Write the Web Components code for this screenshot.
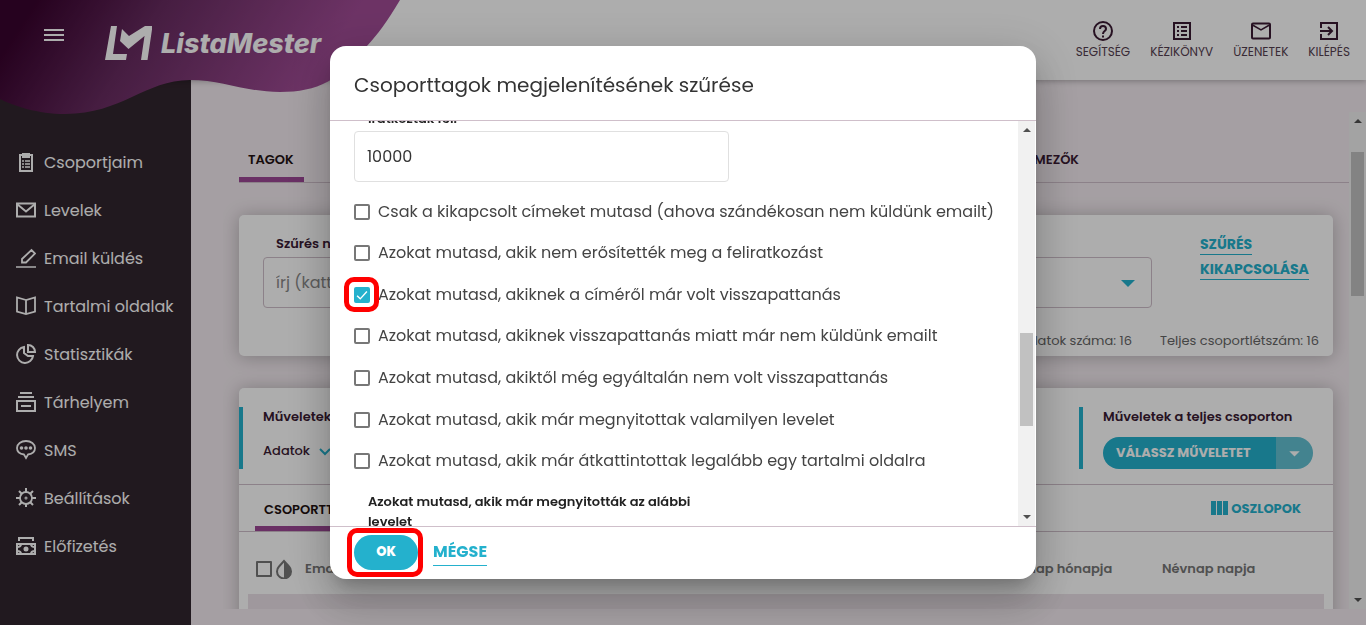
<!DOCTYPE html>
<html lang="hu">
<head>
<meta charset="utf-8">
<meta name="viewport" content="width=device-width, initial-scale=1">
<title>ListaMester</title>
<style>
    :root {
        --teal: #24b1cd;
        --purple: #9c4795;
        --ink: #3a1a33;
        --page: #f3ebf0;
        --side: #32252e;
        --line: #cfbfca;
        --field: #e0e0e0;
    }
    body {
        margin: 0;
        height: 100vh;
        overflow: hidden;
        background: var(--page);
        font-family: Poppins, Inter, "Open Sans", sans-serif;
        font-size: 13px;
        line-height: 20px;
        color: #333;
    }
</style>
</head>
<body>
<lm-app>
    <lm-header slot="header">
        <lm-tool icon="help">SEGÍTSÉG</lm-tool>
        <lm-tool icon="manual">KÉZIKÖNYV</lm-tool>
        <lm-tool icon="message">ÜZENETEK</lm-tool>
        <lm-tool icon="exit">KILÉPÉS</lm-tool>
    </lm-header>
    <lm-sidebar slot="sidebar">
        <lm-nav-item icon="clipboard">Csoportjaim</lm-nav-item>
        <lm-nav-item icon="mail">Levelek</lm-nav-item>
        <lm-nav-item icon="pen">Email küldés</lm-nav-item>
        <lm-nav-item icon="book">Tartalmi oldalak</lm-nav-item>
        <lm-nav-item icon="pie">Statisztikák</lm-nav-item>
        <lm-nav-item icon="storage">Tárhelyem</lm-nav-item>
        <lm-nav-item icon="sms">SMS</lm-nav-item>
        <lm-nav-item icon="gear">Beállítások</lm-nav-item>
        <lm-nav-item icon="money">Előfizetés</lm-nav-item>
    </lm-sidebar>
    <lm-page-tabs></lm-page-tabs>
    <lm-card><lm-filter></lm-filter></lm-card>
    <lm-card><lm-members></lm-members></lm-card>
</lm-app>
<lm-dialog heading="Csoporttagok megjelenítésének szűrése">
    <lm-text-field label="Iratkoztak fel:" value="10000"></lm-text-field>
    <lm-check-list>
        <lm-checkbox>Csak a kikapcsolt címeket mutasd (ahova szándékosan nem küldünk emailt)</lm-checkbox>
        <lm-checkbox>Azokat mutasd, akik nem erősítették meg a feliratkozást</lm-checkbox>
        <lm-checkbox checked marked>Azokat mutasd, akiknek a címéről már volt visszapattanás</lm-checkbox>
        <lm-checkbox>Azokat mutasd, akiknek visszapattanás miatt már nem küldünk emailt</lm-checkbox>
        <lm-checkbox>Azokat mutasd, akiktől még egyáltalán nem volt visszapattanás</lm-checkbox>
        <lm-checkbox>Azokat mutasd, akik már megnyitottak valamilyen levelet</lm-checkbox>
        <lm-checkbox>Azokat mutasd, akik már átkattintottak legalább egy tartalmi oldalra</lm-checkbox>
    </lm-check-list>
    <lm-text-field label="Azokat mutasd, akik már megnyitották az alábbi levelet" value=""></lm-text-field>
</lm-dialog>

<script>
const ICONS = {
    menu: '<path d="M0 6h20M0 11h20M0 16h20"/>',
    help: '<circle cx="10" cy="10" r="9"/><path d="M7 8c0-4 6-4 6 0 0 2-3 2.300-3 5"/><path d="M10 14.500v2"/>',
    manual: '<path d="M2 2h16v16H2z"/><path d="M5 6h2M5 10h2M5 14h2M9 6h6M9 10h6M9 14h6"/>',
    message: '<rect x="1" y="2.500" width="18" height="15" rx="1"/><path stroke-width="1.500" d="M1.500 4l8.500 5 8.500-5"/>',
    exit: '<path d="M2 7V2h16v16H2v-5M1 10h12M9 6l4 4-4 4"/>',
    clipboard: '<path d="M4 3h12v16H4z"/><path d="M7 2h6v3H7z" fill="currentColor"/><path stroke-width="1.500" d="M6 9h2M6 12h2M6 15h2M9 9h5M9 12h5M9 15h5"/>',
    mail: '<path d="M1 3.500h18v13H1z"/><path d="M1 4l9 7.500L19 4"/>',
    pen: '<path stroke-width="1.500" d="M0 19h20"/><path stroke-width="1.800" d="M6 14.500v-3.500L15.500 2l3.500 3.500-9 9z"/>',
    book: '<path stroke-width="1.800" d="M10 4L1 1.500v14L10 18l9-2.500v-14zM10 4v14"/>',
    pie: '<path d="M8 3a8 8 0 1 0 9 9l-5 0L8 9z"/><path d="M12 1v7h7a7 7 0 0 0-7-7z"/>',
    storage: '<path d="M4 1h12M2 5h16M1 9h18v10H1zM5 14h10"/>',
    sms: '<path stroke-width="1.800" d="M10 1c-5 0-9 3-9 7 0 4 3 6 7 6.500l2 3.500 2-3.500c4-.5 7-2.500 7-6.500 0-4-4-7-9-7z"/><g fill="currentColor" stroke="none"><circle cx="5.500" cy="8" r="1.800"/><circle cx="10" cy="8" r="1.800"/><circle cx="14.500" cy="8" r="1.800"/></g>',
    gear: '<circle cx="10" cy="10" r="6" stroke-width="1.800"/><circle cx="10" cy="10" r=".5"/><path d="M10 0v4M10 16v3M0 10h4M16 10h4M3 3l2.500 2.500M14.500 14.500l2.500 2.500M3 17l2.500-2.500M14.500 5.500l2.500-2.500"/>',
    money: '<path d="M3 5V2h14v3M1 8h18v10H1z"/><path d="M5 8c0 2-2 3-4 3M15 8c0 2 2 3 4 3M5 18c0-2-2-3-4-3M15 18c0-2 2-3 4-3"/><circle cx="10" cy="13" r="1.500" fill="currentColor"/>',
    drop: '<path stroke-width="2" d="M10 2L5 7.500a7 7 0 1 0 10 0z"/><path d="M10 1.500v18a7 7 0 0 0 5-12z" fill="currentColor" stroke="none"/>',
    columns: '<g fill="currentColor" stroke="none"><path d="M1 3h5v14H1zM7 3h5v14H7zM13 3h5v14h-5z"/></g>',
    chevron: '<path d="M5 8l5 5 5-5"/>',
    caret: '<path d="M3 7h14l-7 7z" fill="currentColor" stroke="none"/>',
    check: '<path d="M3 11l4.500 4.500L17 5"/>'
};

// Every element below only differs in its template.
class LmElement extends HTMLElement {
    constructor() {
        super();
        this.attachShadow({ mode: 'open' });
    }

    connectedCallback() {
        this.shadowRoot.innerHTML = `
            <style>
                * { box-sizing: border-box; }
                button, input { font: inherit; }
                a { color: inherit; text-decoration: none; }
            </style>
            ${this.template()}
        `;
    }
}

class LmIcon extends LmElement {
    template() {
        return `
            <style>
                :host { display: block; flex: none; width: 20px; height: 20px; }
                svg { display: block; width: 100%; height: 100%; }
            </style>
            <svg viewBox="0 0 20 20" fill="none" stroke="currentColor" stroke-width="2" aria-hidden="true">${ICONS[this.getAttribute('name')]}</svg>
        `;
    }
}

class LmApp extends LmElement {
    template() {
        return `
            <style>
                :host {
                    display: grid;
                    grid-template: 80px minmax(0, 1fr) / 191px minmax(0, 1fr);
                    height: 100vh;
                }
                slot[name="header"] { display: block; grid-column: 1 / 3; z-index: 1; }
                main {
                    display: flex;
                    min-width: 0;
                    padding: 32px 0 16px 32px;
                }
                .content {
                    display: flex;
                    flex: 1;
                    flex-direction: column;
                    gap: 32px;
                    min-width: 0;
                    overflow: hidden;
                    padding: 24px 0 0 16px;
                }
                ::slotted(lm-card) { margin-right: 16px; }
            </style>
            <slot name="header"></slot>
            <slot name="sidebar"></slot>
            <main>
                <div class="content"><slot></slot></div>
                <lm-scrollbar start="29" size="144"></lm-scrollbar>
            </main>
        `;
    }
}

class LmHeader extends LmElement {
    template() {
        return `
            <style>
                :host {
                    display: flex;
                    justify-content: space-between;
                    position: relative;
                    height: 80px;
                    background: #fff;
                    box-shadow: 0 1px 6px rgba(0, 0, 0, .3);
                }
                /* the wave hangs over the side bar and the page */
                .wave { position: absolute; top: 0; left: 0; }
                .brand {
                    display: flex;
                    align-items: flex-start;
                    position: relative;
                    padding: 24px 0 0 44px;
                    color: #fff;
                }
                button {
                    margin: 0 41px 0 0;
                    padding: 0;
                    border: 0;
                    background: none;
                    color: inherit;
                }
                a { display: flex; gap: 9px; }
                .name {
                    font-family: Inter, "Open Sans", sans-serif;
                    font-size: 27px;
                    font-weight: 800;
                    font-style: italic;
                    line-height: 40px;
                }
                nav { display: flex; gap: 20px; padding: 21px 16px 0 0; }
            </style>
            <svg class="wave" width="400" height="116" viewBox="0 0 400 116" aria-hidden="true">
                <linearGradient id="g" gradientUnits="userSpaceOnUse" x1="30" y1="10" x2="260" y2="160">
                    <stop offset="0" stop-color="#39032e"/>
                    <stop offset=".4" stop-color="#682c61"/>
                    <stop offset="1" stop-color="#a14c96"/>
                </linearGradient>
                <path fill="url(#g)" d="M0 0H400C387 22 378 34 367 46C340 80 318 92 280 92C245 92 222 80 190 80C145 80 122 114 65 114C38 114 14 106 0 99Z"/>
            </svg>
            <div class="brand">
                <button aria-label="Menü"><lm-icon name="menu"></lm-icon></button>
                <a href="#" aria-label="ListaMester">
                    <svg width="47" height="38" viewBox="104 24 47 38" fill="currentColor" aria-hidden="true">
                        <path d="M110 26h6l-4 28h14l-1 6h-21z"/>
                        <path d="M121 29l7 7 16-10h7.500l-5 34h-6.500l3.500-24-16 13-8.500-8z"/>
                    </svg>
                    <span class="name">ListaMester</span>
                </a>
            </div>
            <nav><slot></slot></nav>
        `;
    }
}

class LmTool extends LmElement {
    template() {
        return `
            <style>
                :host { display: block; color: var(--ink); }
                a {
                    display: flex;
                    flex-direction: column;
                    align-items: center;
                    font-size: 12px;
                    line-height: 22px;
                }
                span { color: #554050; }
            </style>
            <a href="#"><lm-icon name="${this.getAttribute('icon')}"></lm-icon><span><slot></slot></span></a>
        `;
    }
}

class LmSidebar extends LmElement {
    template() {
        return `
            <style>
                :host { display: block; padding-top: 58px; background: var(--side); }
            </style>
            <nav><slot></slot></nav>
        `;
    }
}

class LmNavItem extends LmElement {
    template() {
        return `
            <style>
                :host { display: block; color: #fff; font-size: 16px; line-height: 25px; }
                a {
                    display: flex;
                    align-items: center;
                    gap: 8px;
                    height: 48px;
                    padding-left: 16px;
                    white-space: nowrap;
                }
            </style>
            <a href="#"><lm-icon name="${this.getAttribute('icon')}"></lm-icon><slot></slot></a>
        `;
    }
}

class LmScrollbar extends LmElement {
    template() {
        return `
            <style>
                :host {
                    display: flex;
                    flex: none;
                    flex-direction: column;
                    align-items: center;
                    width: 17px;
                    padding: 7px 0;
                    background: #f1f1f1;
                }
                i { border: 4px solid transparent; }
                .up { border-top: 0; border-bottom-color: #505050; }
                .down { margin-top: auto; border-bottom: 0; border-top-color: #505050; }
                .thumb {
                    width: 13px;
                    height: ${this.getAttribute('size')}px;
                    margin-top: ${this.getAttribute('start')}px;
                    background: #c1c1c1;
                }
            </style>
            <i class="up"></i><div class="thumb"></div><i class="down"></i>
        `;
    }
}

class LmPageTabs extends LmElement {
    template() {
        return `
            <style>
                :host { display: block; }
                nav {
                    display: flex;
                    justify-content: space-between;
                    height: 47px;
                    padding-right: 260px;
                    border-bottom: 1px solid var(--line);
                    color: var(--ink);
                    font-weight: 600;
                }
                a { padding: 14px 10px 0 9px; }
                .active { border-bottom: 5px solid var(--purple); color: #211; }
            </style>
            <nav><a class="active" href="#">TAGOK</a><a href="#">MEZŐK</a></nav>
        `;
    }
}

class LmCard extends LmElement {
    template() {
        return `
            <style>
                :host {
                    display: block;
                    flex: none;
                    border-radius: 5px;
                    background: #fff;
                    box-shadow: 0 1px 18px rgba(0, 0, 0, .25);
                }
            </style>
            <slot></slot>
        `;
    }
}

class LmFilter extends LmElement {
    template() {
        return `
            <style>
                :host { display: block; padding: 17px 14px 4px 24px; }
                .row { display: flex; gap: 48px; }
                .field { flex: 1; }
                label {
                    display: block;
                    padding: 2px 0 3px 13px;
                    color: var(--ink);
                    font-weight: 600;
                }
                .select {
                    display: flex;
                    align-items: center;
                    height: 51px;
                    padding: 0 13px 0 12px;
                    border: 1px solid var(--line);
                    border-radius: 4px;
                    color: var(--teal);
                }
                input {
                    flex: 1;
                    border: 0;
                    padding: 0;
                    background: none;
                    font-size: 16px;
                }
                input::placeholder { color: #888; }
                .reset { width: 119px; color: var(--teal); font-size: 14px; font-weight: 700; line-height: 25px; }
                .reset a { border-bottom: 1px solid; }
                .totals {
                    display: flex;
                    justify-content: flex-end;
                    gap: 28px;
                    padding-top: 22px;
                    color: #666;
                    line-height: 22px;
                }
            </style>
            <div class="row">
                <div class="field">
                    <label for="name">Szűrés névre</label>
                    <div class="select"><input id="name" placeholder="írj (kattints)"><lm-icon name="caret"></lm-icon></div>
                </div>
                <div class="reset"><a href="#">SZŰRÉS KIKAPCSOLÁSA</a></div>
            </div>
            <div class="totals"><span>Találatok száma: 16</span><span>Teljes csoportlétszám: 16</span></div>
        `;
    }
}

class LmMembers extends LmElement {
    template() {
        return `
            <style>
                :host { display: block; padding-top: 19px; color: var(--ink); }
                .actions {
                    display: flex;
                    justify-content: space-between;
                    padding: 0 20px 15px 0;
                    border-bottom: 1px solid var(--line);
                }
                section {
                    height: 62px;
                    padding-left: 20px;
                    border-left: 4px solid var(--teal);
                    font-weight: 600;
                }
                .data {
                    display: flex;
                    align-items: center;
                    gap: 5px;
                    margin-top: 14px;
                    font-weight: 500;
                }
                .data lm-icon, .columns lm-icon { color: var(--teal); }
                .split {
                    display: flex;
                    width: 210px;
                    height: 32px;
                    margin-top: 10px;
                    border-radius: 16px;
                    overflow: hidden;
                }
                .split button {
                    display: flex;
                    align-items: center;
                    height: 32px;
                    padding: 0 13px;
                    border: 0;
                    background: var(--teal);
                    color: #fff;
                    font-weight: 700;
                    white-space: nowrap;
                }
                .split button:first-child { flex: 1; }
                .split button:last-child { width: 37px; padding: 0 11px; background: #63c1d3; }
                .split lm-icon { width: 15px; height: 15px; }
                .bar {
                    display: flex;
                    justify-content: space-between;
                    height: 47px;
                    padding: 0 32px 0 16px;
                    border-bottom: 1px solid var(--line);
                }
                .tab {
                    padding: 15px 9px 0;
                    border-bottom: 5px solid var(--purple);
                    color: #211;
                    font-weight: 600;
                }
                .columns {
                    display: flex;
                    align-items: center;
                    gap: 1px;
                    color: var(--teal);
                    font-weight: 700;
                    line-height: 21px;
                }
                .list { padding: 0 9px; }
                table { width: 100%; border-collapse: collapse; table-layout: fixed; }
                th {
                    height: 62px;
                    padding: 11px 0 0;
                    color: #777;
                    font-weight: 600;
                    line-height: 21px;
                    text-align: left;
                }
                td { height: 40px; background: #eae1e7; }
                .month { width: 160px; }
                .day { width: 162px; }
                .pick { display: flex; align-items: center; gap: 2px; padding-left: 8px; }
                .pick input {
                    appearance: none;
                    width: 16px;
                    height: 16px;
                    margin: 0;
                    border: 2px solid #777;
                    border-radius: 1px;
                }
                .pick span { padding-left: 9px; }
            </style>
            <div class="actions">
                <section>
                    <div>Műveletek</div>
                    <a class="data" href="#">Adatok <lm-icon name="chevron"></lm-icon></a>
                </section>
                <section>
                    <div>Műveletek a teljes csoporton</div>
                    <div class="split">
                        <button>VÁLASSZ MŰVELETET</button>
                        <button aria-label="Műveletek"><lm-icon name="caret"></lm-icon></button>
                    </div>
                </section>
            </div>
            <div class="bar">
                <a class="tab" href="#">CSOPORTTAGOK</a>
                <a class="columns" href="#"><lm-icon name="columns"></lm-icon>OSZLOPOK</a>
            </div>
            <div class="list">
                <table>
                    <tr>
                        <th><div class="pick"><input type="checkbox" aria-label="Összes"><lm-icon name="drop"></lm-icon><span>Email</span></div></th>
                        <th class="month">Névnap hónapja</th>
                        <th class="day">Névnap napja</th>
                    </tr>
                    <tr><td></td><td></td><td></td></tr>
                </table>
            </div>
        `;
    }
}

class LmTextField extends LmElement {
    template() {
        return `
            <style>
                :host { display: block; max-width: 375px; }
                label {
                    display: block;
                    padding: 0 13px 2px 14px;
                    font-weight: 600;
                    color: #222;
                }
                input {
                    display: block;
                    width: 100%;
                    height: 51px;
                    padding: 0 12px;
                    border: 1px solid var(--field);
                    border-radius: 4px;
                    color: #333;
                    font-size: 16px;
                }
            </style>
            <label for="field">${this.getAttribute('label')}</label>
            <input id="field" value="${this.getAttribute('value')}">
        `;
    }
}

class LmCheckList extends LmElement {
    template() {
        return `
            <style>
                :host {
                    display: grid;
                    grid-auto-rows: 1fr;
                    min-height: 291px;
                    margin: 9px 0 10px;
                }
            </style>
            <slot></slot>
        `;
    }
}

class LmCheckbox extends LmElement {
    template() {
        return `
            <style>
                :host { display: flex; align-items: center; }
                label {
                    display: flex;
                    align-items: center;
                    gap: 8px;
                    color: #444;
                    font-size: 16px;
                    white-space: nowrap;
                }
                .box { display: grid; position: relative; color: #fff; }
                .box > * { grid-area: 1 / 1; }
                input {
                    appearance: none;
                    width: 16px;
                    height: 16px;
                    margin: 0;
                    border: 2px solid #777;
                    border-radius: 2px;
                }
                input:checked { border-color: var(--teal); background: var(--teal); }
                lm-icon { width: 14px; height: 14px; place-self: center; pointer-events: none; }
                :host([marked]) .box::after {
                    content: "";
                    position: absolute;
                    inset: -10px -9px -9px -10px;
                    border: 5px solid #f00;
                    border-radius: 10px;
                }
            </style>
            <label>
                <span class="box">
                    <input type="checkbox" ${this.hasAttribute('checked') ? 'checked' : ''}>
                    <lm-icon name="check"></lm-icon>
                </span>
                <span><slot></slot></span>
            </label>
        `;
    }
}

class LmDialog extends LmElement {
    template() {
        return `
            <style>
                :host {
                    display: flex;
                    justify-content: center;
                    position: fixed;
                    inset: 0;
                    z-index: 2;
                    padding: 46px 0;
                    background: rgba(0, 0, 0, .32);
                }
                .panel {
                    display: flex;
                    flex-direction: column;
                    width: 706px;
                    max-width: 90%;
                    border-radius: 16px;
                    background: #fff;
                    box-shadow: 0 11px 15px -7px rgba(0, 0, 0, .2), 0 24px 38px 3px rgba(0, 0, 0, .14), 0 9px 46px 8px rgba(0, 0, 0, .12);
                }
                h2 {
                    margin: 0;
                    padding: 24px 24px 20px;
                    border-bottom: 1px solid var(--line);
                    font-size: 20px;
                    font-weight: 400;
                    line-height: 30px;
                }
                .body { display: flex; flex: 1; min-height: 0; padding-right: 1px; }
                .content {
                    flex: 1;
                    min-width: 0;
                    overflow: hidden;
                    padding-left: 24px;
                }
                /* scrolled down until only the foot of the first label shows */
                .scrolled { margin-top: -12px; }
                footer {
                    display: flex;
                    align-items: center;
                    gap: 15px;
                    height: 53px;
                    padding: 0 24px 2px;
                    border-top: 1px solid var(--line);
                }
                .ok { position: relative; }
                .ok::after {
                    content: "";
                    position: absolute;
                    inset: -7px -5px -7px -7px;
                    border: 5px solid #f00;
                    border-radius: 10px;
                    pointer-events: none;
                }
                button {
                    display: block;
                    width: 64px;
                    height: 35px;
                    border: 0;
                    border-radius: 18px;
                    background: var(--teal);
                    color: #fff;
                    font-weight: 800;
                }
                footer a {
                    border-bottom: 1px solid;
                    color: var(--teal);
                    font-size: 16px;
                    font-weight: 700;
                    line-height: 26px;
                }
            </style>
            <div class="panel" role="dialog" aria-modal="true" aria-labelledby="heading">
                <h2 id="heading">${this.getAttribute('heading')}</h2>
                <div class="body">
                    <div class="content"><div class="scrolled"><slot></slot></div></div>
                    <lm-scrollbar start="201" size="93"></lm-scrollbar>
                </div>
                <footer>
                    <div class="ok"><button>OK</button></div>
                    <a href="#">MÉGSE</a>
                </footer>
            </div>
        `;
    }
}

customElements.define('lm-icon', LmIcon);
customElements.define('lm-app', LmApp);
customElements.define('lm-header', LmHeader);
customElements.define('lm-tool', LmTool);
customElements.define('lm-sidebar', LmSidebar);
customElements.define('lm-nav-item', LmNavItem);
customElements.define('lm-scrollbar', LmScrollbar);
customElements.define('lm-page-tabs', LmPageTabs);
customElements.define('lm-card', LmCard);
customElements.define('lm-filter', LmFilter);
customElements.define('lm-members', LmMembers);
customElements.define('lm-text-field', LmTextField);
customElements.define('lm-check-list', LmCheckList);
customElements.define('lm-checkbox', LmCheckbox);
customElements.define('lm-dialog', LmDialog);
</script>
</body>
</html>
